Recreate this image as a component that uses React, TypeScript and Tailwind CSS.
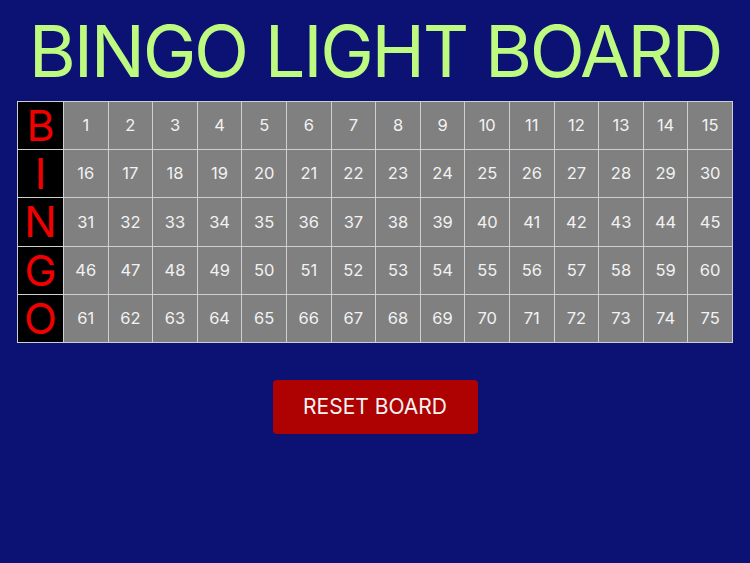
const LETTERS = ["B", "I", "N", "G", "O"];

export default function App() {
  return (
    <div
      className="flex h-[563px] w-[750px] flex-col items-center bg-[#0b1273]"
      style={{ fontFamily: "Inter, 'Liberation Sans', sans-serif" }}
    >
      <h1 className="pt-[15px] text-[72px] leading-none font-normal tracking-[-2.3px] text-[#bffa80]">
        BINGO LIGHT BOARD
      </h1>

      <div className="mt-[14px] grid h-[242px] w-[716px] grid-cols-[45px_repeat(15,1fr)] grid-rows-5 gap-px border border-[#cfcfcf] bg-[#cfcfcf]">
        {LETTERS.map((letter, row) => (
          <Row key={letter} letter={letter} row={row} />
        ))}
      </div>

      <button
        type="button"
        className="mt-[37px] h-[54px] w-[205px] rounded-[4px] bg-[#ae0202] text-[21px] text-[#f4f4f4]"
      >
        RESET BOARD
      </button>
    </div>
  );
}

function Row({ letter, row }: { letter: string; row: number }) {
  return (
    <>
      <div className="flex items-center justify-center bg-black text-[43px] leading-none text-[#f00000]">
        {letter}
      </div>
      {Array.from({ length: 15 }, (_, i) => (
        <div
          key={i}
          className="flex items-center justify-center bg-[#808080] text-[16.5px] text-[#f2f2f2]"
        >
          {row * 15 + i + 1}
        </div>
      ))}
    </>
  );
}
